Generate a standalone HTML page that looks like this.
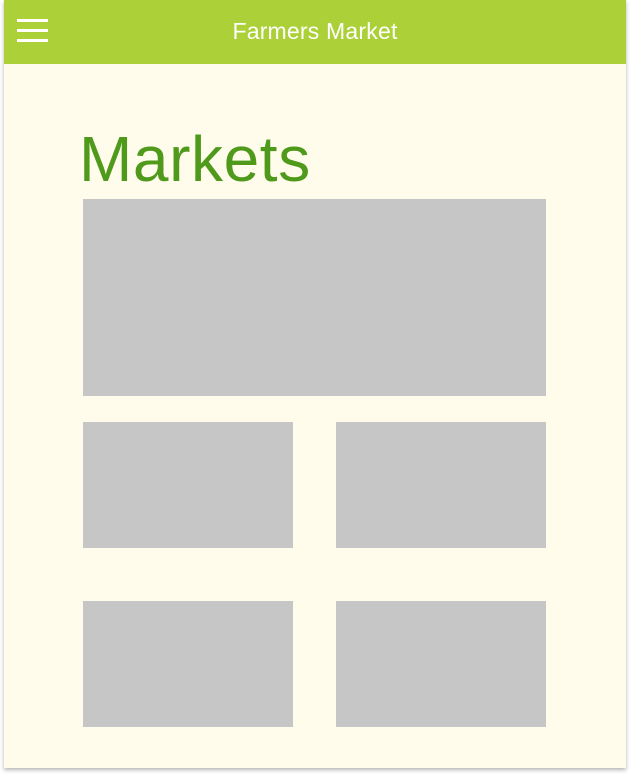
<!DOCTYPE html>
<html><head><style>
body{margin:0;background:#fff;width:630px;height:776px;overflow:hidden;font-family:"Liberation Sans",sans-serif}
.card{position:absolute;left:4px;top:0;width:622px;height:768px;background:#fffceb;box-shadow:0 2px 4px rgba(0,0,0,.3)}
.hdr{position:absolute;left:0;top:0;width:622px;height:64px;background:#acd037}
.hdr .t{position:absolute;left:0;width:622px;top:18px;text-align:center;color:#fff;font-size:23px;letter-spacing:0.2px}
.bar{position:absolute;left:13px;width:31px;height:3px;background:#fff}
h1{position:absolute;left:75px;top:122px;margin:0;font-weight:normal;font-size:64px;color:#4f9a1a;line-height:74px;letter-spacing:0.6px}
.g{position:absolute;background:#c6c6c6}
</style></head><body>
<div class="card">
<div class="hdr"><div class="bar" style="top:19px"></div><div class="bar" style="top:29px"></div><div class="bar" style="top:39px"></div><div class="t">Farmers Market</div></div>
<h1>Markets</h1>
<div class="g" style="left:79px;top:199px;width:463px;height:197px"></div>
<div class="g" style="left:79px;top:422px;width:210px;height:126px"></div>
<div class="g" style="left:332px;top:422px;width:210px;height:126px"></div>
<div class="g" style="left:79px;top:601px;width:210px;height:126px"></div>
<div class="g" style="left:332px;top:601px;width:210px;height:126px"></div>
</div>
</body></html>
